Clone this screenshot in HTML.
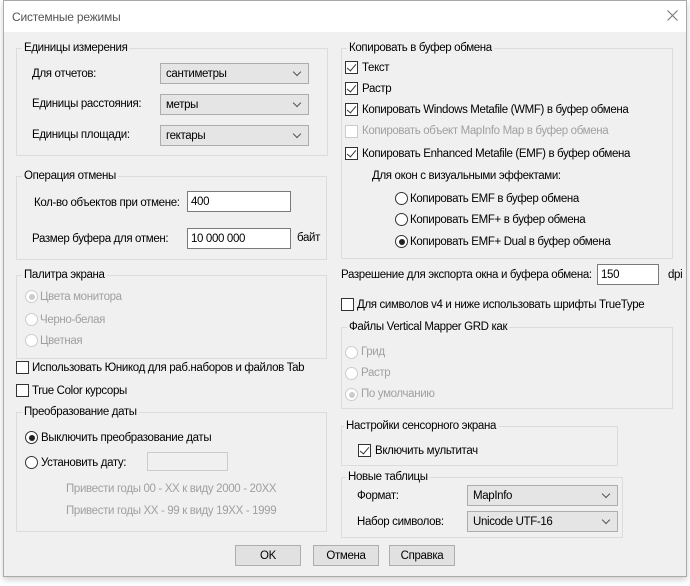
<!DOCTYPE html>
<html><head><meta charset="utf-8"><style>
*{box-sizing:border-box;margin:0;padding:0}
body{width:690px;height:586px;background:#fff;font-family:"Liberation Sans","DejaVu Sans",sans-serif;font-size:11.5px;letter-spacing:-0.35px;color:#000;position:relative;overflow:hidden}
.win{position:absolute;left:3px;top:0;width:684px;height:577px;border:1px solid #aaa;background:#f0f0f0;box-shadow:0 3px 6px rgba(0,0,0,.18)}
.title{position:absolute;left:0;top:0;width:100%;height:31px;background:#fff}
.a{position:absolute;white-space:nowrap;line-height:15px}
.g{position:absolute;border:1px solid #dcdcdc}
.lg{position:absolute;background:#f0f0f0;padding:0 2px;white-space:nowrap;line-height:15px}
.cb{position:absolute;width:13px;height:13px;border:1px solid #333;background:#fff}
.cb.c::after{content:"";position:absolute;left:3px;top:0px;width:4px;height:8px;border:solid #333;border-width:0 1.5px 1.5px 0;transform:rotate(40deg)}
.cb.d{border-color:#ccc}
.rb{position:absolute;width:13px;height:13px;border:1px solid #333;border-radius:50%;background:#fff}
.rb.c::after{content:"";position:absolute;left:2.5px;top:2.5px;width:6px;height:6px;border-radius:50%;background:#222}
.rb.d{border-color:#ccc}
.rb.dc::after{background:#ccc}
.dis{color:#a0a0a0}
.combo{position:absolute;background:#e5e5e5;border:1px solid #adadad;padding-left:5px;line-height:20px}
.combo::after{content:"";position:absolute;right:8px;top:5px;width:5px;height:5px;border:solid #555;border-width:0 1px 1px 0;transform:rotate(45deg)}
.inp{position:absolute;background:#fff;border:1px solid #7a7a7a;padding-left:3px;line-height:20px}
.btn{position:absolute;background:#e1e1e1;border:1px solid #adadad;text-align:center;line-height:20px}
</style></head><body>
<div class="win">
<div class="title"></div>
</div>
<div class="a" style="left:12px;top:10px;color:#555;font-size:12px;letter-spacing:-0.2px">Системные режимы</div>
<svg style="position:absolute;left:667px;top:10px" width="11" height="11"><path d="M0.5 0.5L10.5 10.5M10.5 0.5L0.5 10.5" stroke="#777" stroke-width="1.1"/></svg>

<div class="g" style="left:16px;top:48px;width:312px;height:108px"></div>
<div class="lg" style="left:22px;top:41px">Единицы измерения</div>
<div class="a" style="left:32px;top:67px">Для отчетов:</div>
<div class="combo" style="left:160px;top:63px;width:149px;height:21px">сантиметры</div>
<div class="a" style="left:32px;top:97px">Единицы расстояния:</div>
<div class="combo" style="left:160px;top:94px;width:149px;height:21px">метры</div>
<div class="a" style="left:32px;top:128px">Единицы площади:</div>
<div class="combo" style="left:160px;top:125px;width:149px;height:21px">гектары</div>

<div class="g" style="left:16px;top:176px;width:311px;height:84px"></div>
<div class="lg" style="left:22px;top:169px">Операция отмены</div>
<div class="a" style="left:34px;top:196px">Кол-во объектов при отмене:</div>
<div class="inp" style="left:187px;top:191px;width:104px;height:21px">400</div>
<div class="a" style="left:32px;top:232px">Размер буфера для отмен:</div>
<div class="inp" style="left:187px;top:228px;width:104px;height:21px">10 000 000</div>
<div class="a" style="left:297px;top:231px">байт</div>

<div class="g" style="left:16px;top:275px;width:311px;height:84px"></div>
<div class="lg" style="left:22px;top:268px">Палитра экрана</div>
<div class="rb d dc c" style="left:25px;top:290px"></div><div class="a dis" style="left:40px;top:290px">Цвета монитора</div>
<div class="rb d" style="left:25px;top:313px"></div><div class="a dis" style="left:40px;top:313px">Черно-белая</div>
<div class="rb d" style="left:25px;top:334px"></div><div class="a dis" style="left:40px;top:334px">Цветная</div>

<div class="cb" style="left:16px;top:361px"></div><div class="a" style="left:32px;top:361px">Использовать Юникод для раб.наборов и файлов Tab</div>
<div class="cb" style="left:16px;top:384px"></div><div class="a" style="left:32px;top:384px">True Color курсоры</div>

<div class="g" style="left:16px;top:412px;width:311px;height:120px"></div>
<div class="lg" style="left:22px;top:405px">Преобразование даты</div>
<div class="rb c" style="left:25px;top:431px"></div><div class="a" style="left:41px;top:431px">Выключить преобразование даты</div>
<div class="rb" style="left:25px;top:456px"></div><div class="a" style="left:41px;top:456px">Установить дату:</div>
<div class="a" style="left:147px;top:452px;width:81px;height:19px;border:1px solid #ccc;background:#f0f0f0"></div>
<div class="a dis" style="left:66px;top:482px">Привести годы 00 - XX к виду 2000 - 20XX</div>
<div class="a dis" style="left:66px;top:504px">Привести годы XX - 99 к виду 19XX - 1999</div>

<div class="btn" style="left:235px;top:545px;width:66px;height:21px">OK</div>
<div class="btn" style="left:313px;top:545px;width:66px;height:21px">Отмена</div>
<div class="btn" style="left:389px;top:545px;width:66px;height:21px">Справка</div>

<div class="g" style="left:341px;top:48px;width:332px;height:211px"></div>
<div class="lg" style="left:347px;top:41px">Копировать в буфер обмена</div>
<div class="cb c" style="left:345px;top:61px"></div><div class="a" style="left:362px;top:61px">Текст</div>
<div class="cb c" style="left:345px;top:82px"></div><div class="a" style="left:362px;top:82px">Растр</div>
<div class="cb c" style="left:345px;top:103px"></div><div class="a" style="left:362px;top:103px">Копировать Windows Metafile (WMF) в буфер обмена</div>
<div class="cb d" style="left:345px;top:125px"></div><div class="a dis" style="left:362px;top:124px">Копировать объект MapInfo Map в буфер обмена</div>
<div class="cb c" style="left:345px;top:147px"></div><div class="a" style="left:362px;top:147px">Копировать Enhanced Metafile (EMF) в буфер обмена</div>
<div class="a" style="left:372px;top:169px">Для окон с визуальными эффектами:</div>
<div class="rb" style="left:395px;top:192px"></div><div class="a" style="left:410px;top:192px">Копировать EMF в буфер обмена</div>
<div class="rb" style="left:395px;top:213px"></div><div class="a" style="left:410px;top:213px">Копировать EMF+ в буфер обмена</div>
<div class="rb c" style="left:395px;top:235px"></div><div class="a" style="left:410px;top:235px">Копировать EMF+ Dual в буфер обмена</div>

<div class="a" style="left:341px;top:268px">Разрешение для экспорта окна и буфера обмена:</div>
<div class="inp" style="left:597px;top:264px;width:62px;height:21px">150</div>
<div class="a" style="left:668px;top:268px">dpi</div>

<div class="cb" style="left:341px;top:298px"></div><div class="a" style="left:357px;top:298px">Для символов v4 и ниже использовать шрифты TrueType</div>

<div class="g" style="left:341px;top:327px;width:332px;height:82px"></div>
<div class="lg" style="left:347px;top:320px">Файлы Vertical Mapper GRD как</div>
<div class="rb d" style="left:345px;top:346px"></div><div class="a dis" style="left:361px;top:345px">Грид</div>
<div class="rb d" style="left:345px;top:367px"></div><div class="a dis" style="left:361px;top:366px">Растр</div>
<div class="rb d dc c" style="left:345px;top:388px"></div><div class="a dis" style="left:361px;top:387px">По умолчанию</div>

<div class="g" style="left:341px;top:426px;width:277px;height:40px"></div>
<div class="lg" style="left:344px;top:419px">Настройки сенсорного экрана</div>
<div class="cb c" style="left:358px;top:444px"></div><div class="a" style="left:375px;top:444px">Включить мультитач</div>

<div class="g" style="left:341px;top:477px;width:282px;height:61px"></div>
<div class="lg" style="left:346px;top:470px">Новые таблицы</div>
<div class="a" style="left:357px;top:489px">Формат:</div>
<div class="combo" style="left:467px;top:485px;width:151px;height:21px">MapInfo</div>
<div class="a" style="left:357px;top:515px">Набор символов:</div>
<div class="combo" style="left:467px;top:511px;width:151px;height:21px">Unicode UTF-16</div>
</body></html>
